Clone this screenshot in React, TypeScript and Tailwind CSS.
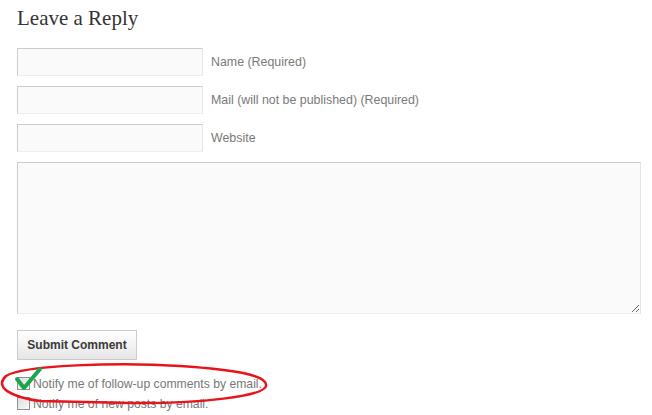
const fields = [
  { id: 'author', label: 'Name (Required)' },
  { id: 'email', label: 'Mail (will not be published) (Required)' },
  { id: 'url', label: 'Website' },
]

const boxes = [
  'Notify me of follow-up comments by email.',
  'Notify me of new posts by email.',
]

function Box() {
  return (
    <span className="w-[13px] h-[13px] shrink-0 border border-[#8f8f8f] bg-gradient-to-br from-[#dcdcdc] to-[#fbfbfb]" />
  )
}

export default function App() {
  return (
    <main className="relative w-[652px] h-[415px] bg-white overflow-hidden font-['Liberation_Sans',Arial,sans-serif]">
      <div className="pl-[17px] pt-[5px]">
        <h3 className="h-[43px] text-[21px] leading-[26px] text-[#333] font-['Liberation_Serif',Georgia,serif]">
          Leave a Reply
        </h3>

        <div className="flex flex-col gap-[10px]">
          {fields.map((f) => (
            <div key={f.id} className="flex items-center gap-[8px]">
              <input
                id={f.id}
                className="w-[186px] h-[28px] bg-[#fafafa] border border-[#ccc] border-r-[#e6e6e6] border-b-[#eee] outline-none"
              />
              <label htmlFor={f.id} className="text-[12.4px] text-[#7a7a7a]">
                {f.label}
              </label>
            </div>
          ))}
        </div>

        <textarea className="block mt-[10px] w-[624px] h-[152px] bg-[#fafafa] border border-[#ccc] border-r-[#e6e6e6] border-b-[#eee] outline-none resize" />

        <button className="mt-[16px] w-[120px] h-[30px] border border-[#ccc] bg-gradient-to-b from-white to-[#e6e6e6] text-[12px] font-bold text-[#3a3a3a]">
          Submit Comment
        </button>

        <div className="mt-[17px] flex flex-col gap-[7px]">
          {boxes.map((b) => (
            <label key={b} className="flex items-center gap-[3px] h-[13px] text-[12.2px] text-[#777]">
              <Box />
              <span className="leading-[13px] pt-[2px]">{b}</span>
            </label>
          ))}
        </div>
      </div>

      {/* hand-drawn annotation */}
      <svg className="absolute left-0 top-[362px] pointer-events-none" width="280" height="46" viewBox="0 0 280 46">
        <path
          d="M40 39 C 10 35, -6 25, 6 14 C 22 3, 120 0, 180 4 C 240 8, 268 14, 266 24 C 264 34, 200 42, 130 41 C 80 40, 46 39, 40 39"
          fill="none"
          stroke="#e8141c"
          strokeWidth="2.5"
        />
        <path d="M17 17 L24 26 L40 7" fill="none" stroke="#1aa64a" strokeWidth="4" strokeLinecap="round" strokeLinejoin="round" />
      </svg>
    </main>
  )
}
